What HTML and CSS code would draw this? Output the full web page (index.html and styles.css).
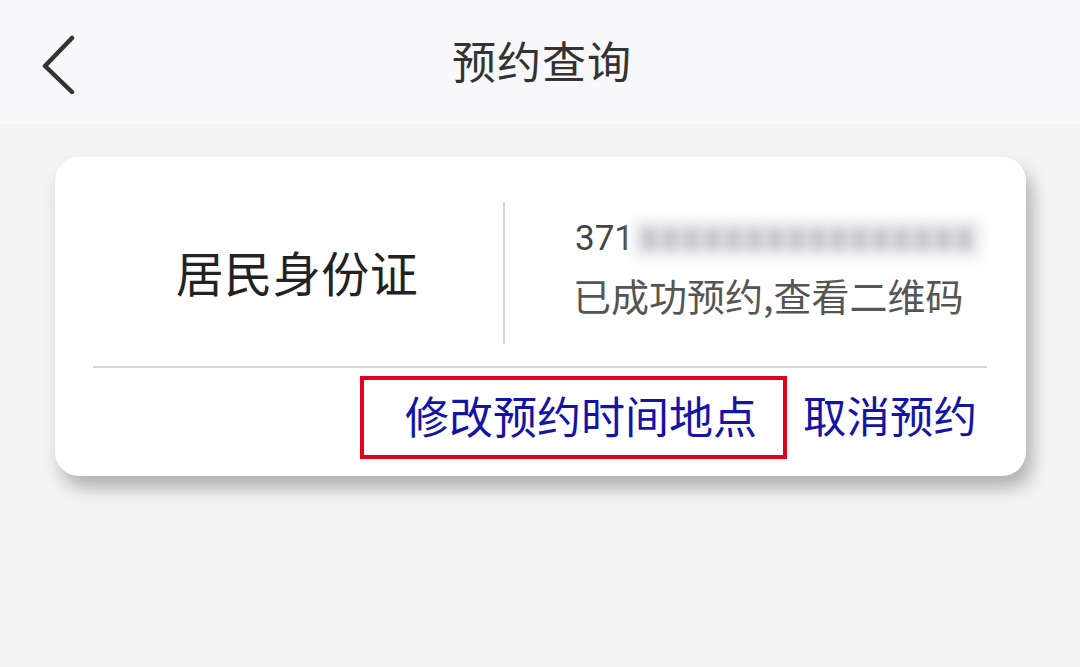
FILE: index.html
```html
<!DOCTYPE html>
<html lang="zh">
<head>
<meta charset="utf-8">
<link rel="stylesheet" href="styles.css">
</head>
<body>
<header class="nav">
  <svg class="back" width="40" height="60" viewBox="0 0 40 60"><path d="M33 4 L6 32 L33 58" fill="none" stroke="#333" stroke-width="4.5" stroke-linecap="round" stroke-linejoin="round"/></svg>
  <h1 class="title">预约查询</h1>
</header>
<main class="content">
  <section class="card">
    <div class="top">
      <div class="doc">居民身份证</div>
      <div class="vline"></div>
      <div class="info">
        <div class="idnum">371<span class="blur"><i></i><i></i><i></i><i></i><i></i><i></i><i></i><i></i><i></i><i></i><i></i><i></i><i></i><i></i><i></i><i></i></span></div>
        <div class="status">已成功预约,查看二维码</div>
      </div>
    </div>
    <div class="hline"></div>
    <div class="actions">
      <div class="highlight"><span class="link">修改预约时间地点</span></div>
      <span class="link cancel">取消预约</span>
    </div>
  </section>
</main>
</body>
</html>
```

FILE: styles.css
```css
html, body {
  margin: 0;
  padding: 0;
}
body {
  width: 1080px;
  height: 667px;
  background: #f4f4f4;
  font-family: "Noto Sans CJK SC", "Noto Sans", sans-serif;
  overflow: hidden;
}
.nav {
  height: 124px;
  background: #f8f8fa;
  position: relative;
  display: flex;
  align-items: center;
  justify-content: center;
}
.back {
  position: absolute;
  left: 39px;
  top: 34px;
}
.title {
  margin: 0;
  font-size: 44px;
  font-weight: 400;
  color: #333;
  letter-spacing: 1px;
  line-height: 1;
  position: relative;
  left: 2px;
  top: -2px;
}
.content {
  padding: 33px 54px 0 55px;
}
.card {
  width: 971px;
  height: 319px;
  background: #fff;
  border-radius: 24px;
  box-shadow: 6px 12px 18px rgba(0,0,0,0.28);
  display: flex;
  flex-direction: column;
}
.top {
  height: 209px;
  display: flex;
  align-items: flex-start;
}
.doc {
  width: 448px;
  height: 209px;
  display: flex;
  align-items: center;
  justify-content: center;
  padding-left: 36px;
  box-sizing: border-box;
  font-size: 48px;
  color: #222;
  letter-spacing: 0.5px;
  padding-top: 18px;
}
.vline {
  width: 2px;
  height: 142px;
  margin-top: 45px;
  background: #d6d6d6;
}
.info {
  padding-left: 70px;
  padding-top: 58px;
  color: #555;
}
.idnum {
  font-family: "Roboto", "Noto Sans", sans-serif;
  font-size: 35px;
  line-height: 48px;
  height: 48px;
  display: flex;
  align-items: center;
  color: #444;
}
.blur {
  display: inline-flex;
  align-items: center;
  gap: 6px;
  height: 40px;
  margin-left: -2px;
  padding: 0 10px;
  filter: blur(6px);
  background: #eeeef0;
}
.blur i {
  display: block;
  width: 15px;
  height: 22px;
  background: #c0c0c6;
  border-radius: 4px;
}
.status {
  font-size: 38px;
  line-height: 50px;
  margin-top: 7px;
  margin-left: -2px;
  color: #555;
}
.hline {
  height: 2px;
  margin: 0 39px 0 38px;
  background: #d4d4d4;
}
.actions {
  display: flex;
  align-items: flex-start;
  padding-top: 8px;
  padding-left: 305px;
}
.highlight {
  width: 427px;
  height: 83px;
  box-sizing: border-box;
  border: 4px solid #e3001a;
  display: flex;
  align-items: center;
  padding-left: 41px;
  padding-bottom: 6px;
}
.link {
  font-size: 44px;
  color: #1414a6;
  line-height: 1;
}
.cancel {
  margin-left: 16px;
  height: 77px;
  display: flex;
  align-items: center;
  font-size: 43.5px;
}
```
